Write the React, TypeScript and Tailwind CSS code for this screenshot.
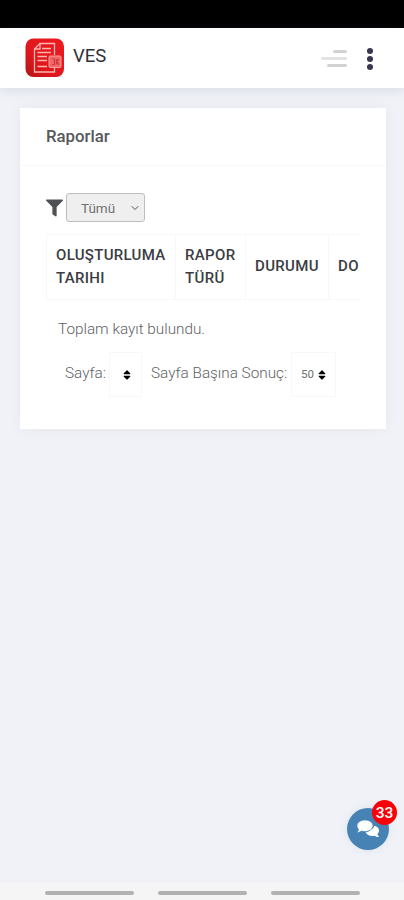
import React from "react";
import { FaFilter, FaSort } from "react-icons/fa";
import { FiChevronDown } from "react-icons/fi";

const Logo = () => {
  return (
    <svg viewBox="0 0 40 40" className="h-10 w-10 shrink-0" fill="none">
      <defs>
        <linearGradient id="logo-bg" x1="0" y1="1" x2="1" y2="0">
          <stop offset="0" stopColor="#b01519" />
          <stop offset="0.35" stopColor="#de171d" />
          <stop offset="1" stopColor="#ee1a1f" />
        </linearGradient>
      </defs>
      <rect x="0.5" y="0.5" width="38.500" height="38.500" rx="8" fill="url(#logo-bg)" />
      <g stroke="#ffb5b0" strokeWidth="1.3">
        <path d="M29.500 17V5.500H15L9.500 11V34H29.500V30" />
        <path d="M15 5.500V11H9.500" />
        <path d="M17 10.500H26M12.500 14.500H26M12.500 18.500H22M12.500 22.500H22M12.500 28.500H22" />
      </g>
      <rect x="24" y="18" width="12" height="11.500" rx="1" fill="#ef6a69" stroke="#f99b97" />
      <path d="M27 21H29.500V26.500H27M31.500 21V26.500M34 21L31.500 23.500L34 26.500" stroke="#d7383a" strokeWidth="1.200" />
    </svg>
  );
};

const ChatIcon = () => {
  return (
    <svg viewBox="0 0 24 20" className="h-5 w-6" fill="white">
      <path d="M15 10.500C17 9.600 18 8.500 18.300 6.800C21.200 7.500 23 9.200 23 11.500C23 12.900 22.400 14 21.400 15C21.600 16.200 22.300 17 23.200 18C21.300 18.100 19.700 17.400 18.600 16.700C14.700 17.600 10.900 16.300 9.600 13.300C11.900 13 13.700 12 15 10.500Z" />
      <path
        d="M9 1C4.600 1 1 3.500 1 6.800C1 8.200 1.600 9.500 2.600 10.400C2.400 11.600 1.600 12.500 0.800 13.400C2.600 13.500 4.300 12.800 5.500 12C6.600 12.400 7.800 12.600 9 12.600C13.400 12.600 17 10 17 6.800C17 3.500 13.400 1 9 1Z"
        stroke="#4682b4"
        strokeWidth="0.700"
      />
    </svg>
  );
};

const Header = () => {
  return (
    <header className="flex h-[60px] items-center bg-white pl-[25px] pr-[31px] shadow-[0_1px_12px_rgba(69,80,110,0.16)]">
      <Logo />
      <span className="ml-2 -mt-1 text-[18.500px] leading-6 text-[#303036]">VES</span>
      <div className="ml-auto mt-[1px] flex items-center">
        <div className="flex w-[27px] flex-col items-end gap-1">
          <span className="h-[3px] w-[14px] rounded-full bg-[#d2d2d2]" />
          <span className="h-[3px] w-[26px] rounded-full bg-[#e2e2e2]" />
          <span className="h-[3px] w-[20px] rounded-full bg-[#d2d2d2]" />
        </div>
        <div className="ml-5 flex flex-col gap-[2px]">
          <span className="h-[6px] w-[6px] rounded-full bg-[#3a364f]" />
          <span className="h-[6px] w-[6px] rounded-full bg-[#3a364f]" />
          <span className="h-[6px] w-[6px] rounded-full bg-[#3a364f]" />
        </div>
      </div>
    </header>
  );
};

const ReportTable = () => {
  return (
    <div className="mt-3 overflow-hidden">
      <table className="w-full table-fixed border-collapse text-left text-[15px] font-medium leading-[23px] text-[#3b3d42]">
        <thead>
          <tr className="h-[65px]">
            <th className="w-[129px] border border-[#f8f8fa] pl-[9px] font-medium tracking-[0.3px]">
              OLUŞTURLUMA TARIHI
            </th>
            <th className="w-[70px] border border-[#f8f8fa] pl-[9px] font-medium tracking-[0.35px]">
              RAPOR TÜRÜ
            </th>
            <th className="w-[83px] border border-[#f8f8fa] pb-[2px] pl-[9px] font-medium tracking-[0.35px]">DURUMU</th>
            <th className="border-y border-[#f8f8fa] pb-[2px] pl-[9px] font-medium tracking-[0.35px]">DO</th>
          </tr>
        </thead>
      </table>
    </div>
  );
};

const App = () => {
  return (
    <div className="flex h-[900px] w-[404px] flex-col overflow-hidden bg-[#f0f2f7] font-[Roboto,sans-serif]">
      <div className="h-7 shrink-0 bg-black" />
      <Header />

      <main className="ml-[20px] mr-[18px] mt-5 h-[321px] bg-white shadow-[0_0_13px_rgba(82,63,105,0.06)]">
        <div className="flex h-[58px] items-center border-b border-[#f8f8fb] pl-[26px]">
          <h3 className="text-[16.800px] font-medium text-[#56585c]">Raporlar</h3>
        </div>

        <div className="pl-[26px] pr-[25px] pt-[27px]">
          <div className="flex items-center">
            <FaFilter className="h-[18px] w-[17px] text-[#505154]" />
            <button className="ml-[3px] flex h-[29px] w-[79px] items-center justify-between rounded-[3px] border border-[#bdbdbd] bg-[#efefef] pl-[14px] pr-[3px] text-[13.500px] text-[#707070]">
              <span className="pt-[2px]">Tümü</span>
              <FiChevronDown className="h-[12px] w-[12px] text-[#555]" />
            </button>
          </div>

          <ReportTable />

          <p className="ml-[12px] mt-[17px] text-[15.300px] font-light leading-6 text-[#606266]">
            Toplam kayıt bulundu.
          </p>

          {/* pager */}
          <div className="ml-[19px] mt-[11px] flex items-center whitespace-nowrap text-[15.300px] font-light text-[#606266]">
            <span className="w-[44px] pb-[3px]">Sayfa:</span>
            <button className="flex h-[45px] w-[33px] items-center justify-center border border-[#f8f8fa] pl-[2px]">
              <FaSort className="h-[12px] w-[8px] text-black" />
            </button>
            <span className="ml-[9px] w-[140px] pb-[3px]">Sayfa Başına Sonuç:</span>
            <button className="flex h-[45px] w-[45px] items-center justify-center gap-1 border border-[#f8f8fa] text-[11.500px] font-normal text-[#707070]">
              <span>50</span>
              <FaSort className="h-[12px] w-[8px] text-black" />
            </button>
          </div>
        </div>
      </main>

      <div className="relative mb-[33px] ml-auto mr-[15px] mt-auto flex h-[42px] w-[42px] shrink-0 items-center justify-center rounded-full bg-[#4682b4] shadow-[0_0_10px_rgba(70,130,180,0.12)]">
        <ChatIcon />
        <span className="absolute -right-[8px] -top-[8px] flex h-[25px] w-[25px] items-center justify-center rounded-full bg-[#fa0008] pt-[3px] text-[15.500px] font-medium text-white">
          33
        </span>
      </div>

      <footer className="flex h-[17px] shrink-0 items-start justify-center gap-6 bg-[#f5f5f6] pt-[8px]">
        <span className="h-[4px] w-[89px] rounded-sm bg-[#b2b2b2]" />
        <span className="h-[4px] w-[89px] rounded-sm bg-[#b2b2b2]" />
        <span className="h-[4px] w-[89px] rounded-sm bg-[#b2b2b2]" />
      </footer>
    </div>
  );
};

export default App;
